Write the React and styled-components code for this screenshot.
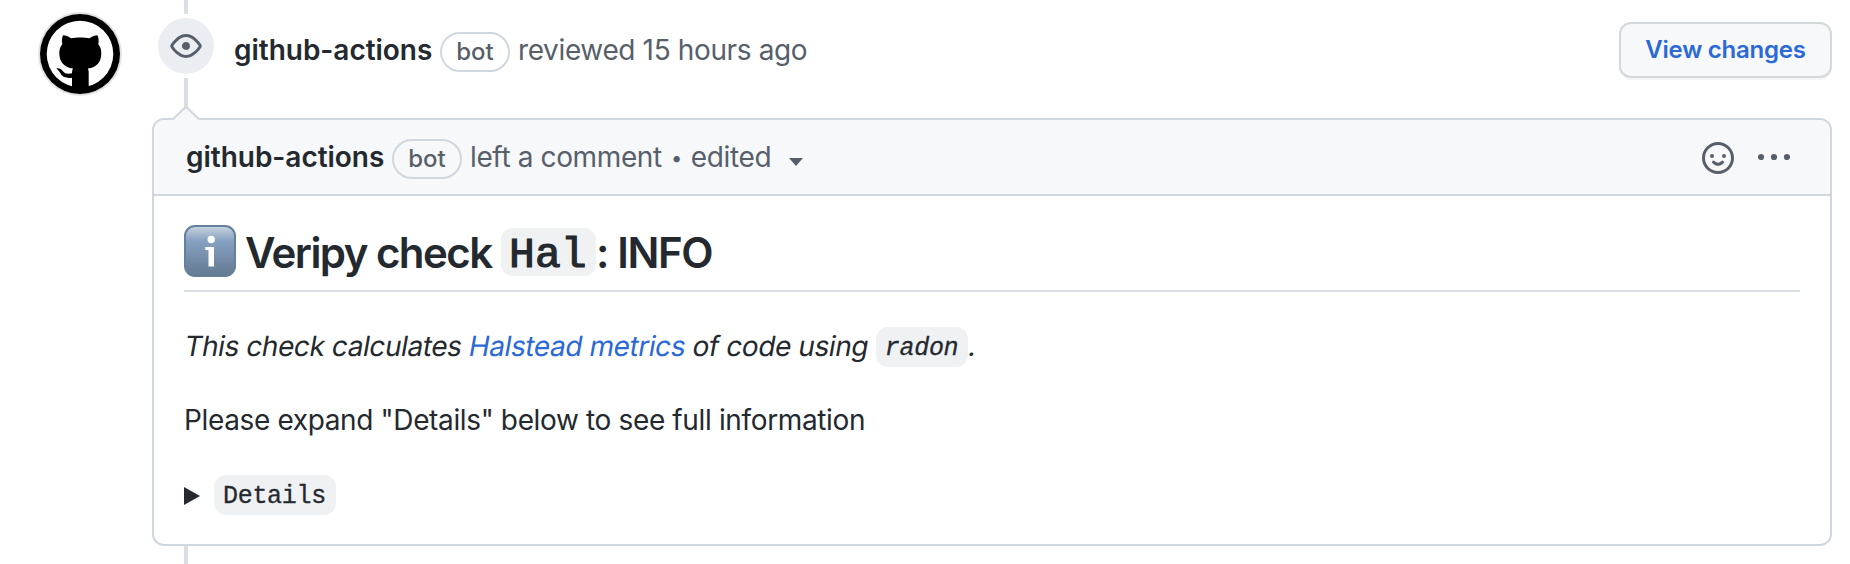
import React from "react";
import styled, { createGlobalStyle } from "styled-components";

const Global = createGlobalStyle`
  * { box-sizing: border-box; }
  body { margin: 0; background: #fff; color: #24292f; font: 28px/42px Inter, "Liberation Sans", sans-serif; }
`;

const Page = styled.main`
  height: 564px;
  padding: 0 18px 0 40px;
  display: grid;
  grid-template-columns: 80px 1fr;
  column-gap: 32px;
  overflow: hidden;
`;
const Avatar = styled.svg`
  display: block;
  width: 84px;
  height: 84px;
  margin: 12px -2px 0;
`;
const Timeline = styled.div`
  display: flex;
  flex-direction: column;
`;
const Event = styled.header`
  display: flex;
  height: 118px;
  padding-left: 6px;
`;
const Rail = styled.div`
  width: 56px;
  display: flex;
  flex-direction: column;
  align-items: center;
`;
const RailLine = styled.div`
  width: 4px;
  height: ${(p) => p.$h}px;
  background: #d8dee4;
  margin-left: ${(p) => p.$inset || 0}px;
`;
const EventBadge = styled.div`
  width: 56px;
  height: 56px;
  margin: 4px 0;
  border-radius: 50%;
  background: #eaeef2;
  color: #57606a;
  display: grid;
  place-items: center;
`;
const Icon = styled.svg`
  display: block;
  width: 32px;
  height: 32px;
  fill: currentColor;
`;
const Byline = styled.div`
  display: flex;
  align-items: baseline;
  white-space: pre;
  color: #57606a;
  letter-spacing: -0.37px;
`;
const EventByline = styled(Byline)`
  padding: 29px 0 0 20px;
  flex: 1;
`;
const Author = styled.strong`
  color: #24292f;
  font-weight: 600;
  width: 198px;
  letter-spacing: -0.03px;
`;
const BotLabel = styled.span`
  width: 70px;
  height: 40px;
  margin: 0 8px;
  border: 2px solid #d0d7de;
  border-radius: 20px;
  font-size: 24px;
  font-weight: 500;
  line-height: 36px;
  text-align: center;
  letter-spacing: 0;
`;
const ViewButton = styled.button`
  width: 213px;
  height: 56px;
  margin-top: 22px;
  border: 2px solid #d5d8da;
  border-radius: 12px;
  background: #f6f8fa;
  box-shadow: 0 2px 0 rgba(27, 31, 36, 0.04);
  color: #2b69d6;
  font: 600 24px/36px Inter, sans-serif;
  letter-spacing: -0.25px;
  padding: 0;
`;
const Card = styled.article`
  height: 428px;
  border: 2px solid #d0d7de;
  border-radius: 12px;
  position: relative;
`;
const Caret = styled.svg`
  position: absolute;
  left: 18px;
  top: -14px;
  width: 28px;
  height: 15px;
`;
const CardHeader = styled.header`
  height: 76px;
  border-bottom: 2px solid #d0d7de;
  border-radius: 10px 10px 0 0;
  background: #f6f8fa;
  display: flex;
  justify-content: space-between;
  padding: 16px 40px 0 32px;
  color: #57606a;
`;
const Separator = styled.span`
  width: 29px;
  text-align: center;
  font-size: 20px;
  transform: translateY(-2px);
`;
const EditedCaret = styled.span`
  border: 7px solid transparent;
  border-top: 8px solid #57606a;
  border-bottom: 0;
  margin-left: 18px;
  transform: translateY(-1px);
`;
const Actions = styled.div`
  display: flex;
  gap: 24px;
  padding-top: 6px;
`;
const Body = styled.div`
  padding: 24px 30px;
`;
const Title = styled.h2`
  margin: 0;
  height: 72px;
  border-bottom: 2px solid #d8dee4;
  display: flex;
  align-items: flex-start;
  white-space: pre;
  font-size: 42px;
  line-height: 52px;
  font-weight: 600;
`;
const InfoEmoji = styled.svg`
  width: 52px;
  height: 52px;
  margin: 5px 9px 0 0;
`;
const TitleText = styled.span`
  padding-top: 7px;
  letter-spacing: ${(p) => p.$ls}px;
  width: ${(p) => p.$w}px;
`;
const Code = styled.code`
  display: inline-block;
  height: 40px;
  padding: 0 10px 0 9px;
  border-radius: 12px;
  background: #eff1f3;
  font: 25px/43px "Liberation Mono", monospace;
  font-style: inherit;
  letter-spacing: -0.3px;
  -webkit-text-stroke: 0.3px #24292f;
`;
const TitleCode = styled(Code)`
  height: 48px;
  width: 95px;
  margin-top: 8px;
  padding: 0 8px;
  font: 400 43px/56px "Liberation Mono", monospace;
  letter-spacing: 0.1px;
  -webkit-text-stroke: 1.2px #24292f;
`;
const Paragraph = styled.p`
  margin: 0;
  height: 42px;
  margin-top: ${(p) => p.$top}px;
  white-space: pre;
  letter-spacing: -0.36px;
`;
const Emphasis = styled(Paragraph)`
  display: flex;
  align-items: flex-start;
  letter-spacing: -0.42px;
`;
const Slanted = styled.em`
  display: inline-block;
  font-style: normal;
  transform: skewX(-10deg);
  transform-origin: 0 60%;
`;
const ItalicCode = styled(Code)`
  font-style: italic;
  margin: 2px 0 0 8px;
`;
const Link = styled.a`
  color: #2b69d6;
`;
const Details = styled.div`
  display: flex;
  align-items: center;
  gap: 14px;
  margin-top: 34px;
`;
const Disclosure = styled.span`
  border: 9px solid transparent;
  border-left: 16px solid #24292f;
  border-right: 0;
  margin-top: 1px;
`;

const Octocat = () => (
  <Avatar viewBox="0 0 84 84">
    <circle cx="42" cy="42" r="42" fill="#e2e2e2" />
    <circle cx="42" cy="42" r="40" fill="#000" />
    <circle cx="42" cy="42" r="33.300" fill="#fff" />
    <path d="M25 23.300c2.500 0 5.500 1.300 8 3 5.500-1.200 13-1.200 18.500 0 2.500-1.700 5.500-3 8-3 1.300 3 1.400 6 .8 9 2.200 2.800 3 5.700 3 9 0 9-4.500 14.200-13.500 15.200.7 1.200.9 2.500.9 4v14l3 3H31l3-3V65.800c-6.500.8-9.500-1-11.300-4-1.200-2.200-2.400-3-4.400-5.500 3-.5 5 .8 6.600 3 2 2.500 5 3 9.100 2 0-2 .3-3.500 1-4.800-8.500-1-13.700-6.200-13.700-15.200 0-3.300.8-6.200 3-9-.6-3-.6-6 .7-9z" />
  </Avatar>
);

export default function App() {
  return (
    <>
      <Global />
      <Page>
        <Octocat />
        <Timeline>
          <Event>
            <Rail>
              <RailLine $h={14} />
              <EventBadge>
                <Icon viewBox="0 0 16 16">
                  <path d="M8 2c1.981 0 3.671.992 4.933 2.078 1.27 1.091 2.187 2.345 2.637 3.023a1.62 1.62 0 0 1 0 1.798c-.45.678-1.367 1.932-2.637 3.023C11.67 13.008 9.981 14 8 14c-1.981 0-3.671-.992-4.933-2.078C1.797 10.83.88 9.576.43 8.898a1.62 1.62 0 0 1 0-1.798c.45-.677 1.367-1.931 2.637-3.022C4.33 2.992 6.019 2 8 2ZM1.679 7.932a.12.12 0 0 0 0 .136c.411.622 1.241 1.75 2.366 2.717C5.176 11.758 6.527 12.5 8 12.5c1.473 0 2.825-.742 3.955-1.715 1.124-.967 1.954-2.096 2.366-2.717a.12.12 0 0 0 0-.136c-.412-.621-1.242-1.75-2.366-2.717C10.824 4.242 9.473 3.5 8 3.5c-1.473 0-2.825.742-3.955 1.715-1.124.967-1.954 2.096-2.366 2.717ZM8 10a2 2 0 1 1-.001-3.999A2 2 0 0 1 8 10Z" />
                </Icon>
              </EventBadge>
              <RailLine $h={40} />
            </Rail>
            <EventByline>
              <Author>github-actions</Author>
              <BotLabel>bot</BotLabel>
              <span>reviewed 15 hours ago</span>
            </EventByline>
            <ViewButton>View changes</ViewButton>
          </Event>
          <Card>
            <Caret viewBox="0 0 28 15">
              <path d="M0 14 14 0.500 28 14V15H0Z" fill="#f6f8fa" />
              <path d="M0.500 13.500 14 0.700 27.500 13.500" fill="none" stroke="#d0d7de" strokeWidth="2" />
            </Caret>
            <CardHeader>
              <Byline>
                <Author>github-actions</Author>
                <BotLabel>bot</BotLabel>
                <span>left a comment</span>
                <Separator>•</Separator>
                <span>edited</span>
                <EditedCaret />
              </Byline>
              <Actions>
                <Icon viewBox="0 0 32 32">
                  <circle cx="16" cy="16" r="14.500" fill="none" stroke="currentColor" strokeWidth="3" />
                  <circle cx="10" cy="14" r="2" />
                  <circle cx="22" cy="14" r="2" />
                  <path d="M11.500 20.200q4.500 4.300 9 0" fill="none" stroke="currentColor" strokeWidth="3" strokeLinecap="round" />
                </Icon>
                <Icon viewBox="0 0 32 32">
                  <circle cx="3" cy="15" r="3.100" />
                  <circle cx="16" cy="15" r="3.100" />
                  <circle cx="29" cy="15" r="3.100" />
                </Icon>
              </Actions>
            </CardHeader>
            <Body>
              <Title>
                <InfoEmoji viewBox="0 0 52 52">
                  <defs>
                    <linearGradient id="tile" x1="0" y1="0" x2="0" y2="1">
                      <stop offset="0" stopColor="#c5d2de" />
                      <stop offset="0.280" stopColor="#86a1c1" />
                      <stop offset="1" stopColor="#647991" />
                    </linearGradient>
                  </defs>
                  <rect width="52" height="52" rx="11" fill="#64809b" />
                  <rect x="2" y="2" width="48" height="49" rx="9" fill="url(#tile)" />
                  <circle cx="27.200" cy="14.500" r="3.700" fill="#fff" />
                  <path d="M21.300 22H30v19.500h-5.500V25h-3.200z" fill="#fff" />
                </InfoEmoji>
                <TitleText $ls={-1.55} $w={256}>Veripy check</TitleText>
                <TitleCode>Hal</TitleCode>
                <TitleText $ls={-1.4}>: INFO</TitleText>
              </Title>
              <Emphasis $top={33}>
                <Slanted>This check calculates <Link>Halstead metrics</Link> of code using</Slanted>
                <ItalicCode>radon</ItalicCode>
                <Slanted>.</Slanted>
              </Emphasis>
              <Paragraph $top={32}>Please expand "Details" below to see full information</Paragraph>
              <Details>
                <Disclosure />
                <Code>Details</Code>
              </Details>
            </Body>
          </Card>
          <RailLine $h={18} $inset={32} />
        </Timeline>
      </Page>
    </>
  );
}
